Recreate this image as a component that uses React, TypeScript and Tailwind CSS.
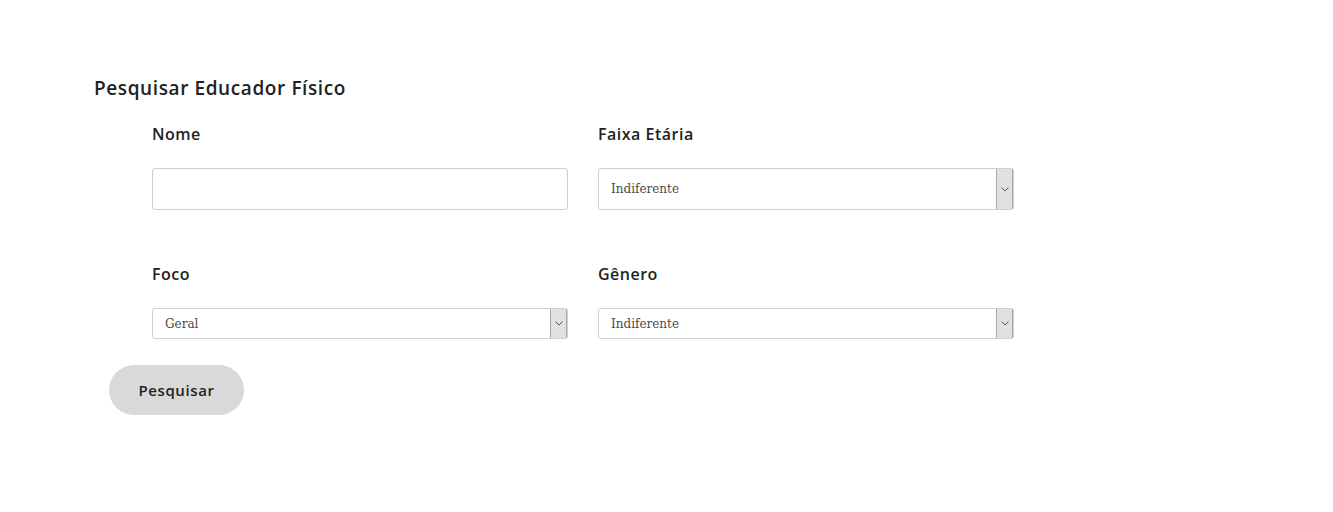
import React from 'react'

const Select = ({ value, tall }: { value: string; tall?: boolean }) => (
  <div
    className={`flex items-stretch w-[416px] border border-[#cfcfcf] rounded-[3px] bg-white ${tall ? 'h-[42px]' : 'h-[31px]'}`}
  >
    <div className="flex-1 flex items-center pl-3 text-[12px] text-[#4a4a4a] font-['DejaVu_Serif',serif]">
      {value}
    </div>
    <div className="w-[17px] bg-[#e1e1e1] border-l border-[#a9a9a9] border-r border-r-[#a9a9a9] flex items-center justify-center">
      <svg width="8" height="5" viewBox="0 0 8 5" fill="none">
        <path d="M0.5 0.5 L4 4 L7.5 0.5" stroke="#555" strokeWidth="1" />
      </svg>
    </div>
  </div>
)

const Label = ({ children }: { children: React.ReactNode }) => (
  <p className="text-[16px] font-semibold text-[#222] leading-5 tracking-[0.5px]">{children}</p>
)

export default function App() {
  return (
    <div className="min-h-[512px] bg-white font-['Open_Sans',sans-serif] pt-[76px] pl-[94px]">
      <h1 className="text-[19px] font-semibold text-[#222] leading-6 tracking-[0.6px]">Pesquisar Educador Físico</h1>

      <div className="pl-[58px] mt-[24px] grid grid-cols-[416px_416px] gap-x-[30px]">
        <div>
          <Label>Nome</Label>
          <input className="mt-[24px] w-[416px] h-[42px] border border-[#cfcfcf] rounded-[3px] outline-none" />
        </div>
        <div>
          <Label>Faixa Etária</Label>
          <div className="mt-[24px]">
            <Select value="Indiferente" tall />
          </div>
        </div>
        <div className="mt-[54px]">
          <Label>Foco</Label>
          <div className="mt-[24px]">
            <Select value="Geral" />
          </div>
        </div>
        <div className="mt-[54px]">
          <Label>Gênero</Label>
          <div className="mt-[24px]">
            <Select value="Indiferente" />
          </div>
        </div>
      </div>

      <button className="ml-[15px] mt-[26px] w-[135px] h-[50px] rounded-full bg-[#d9d9d9] text-[15px] font-semibold text-[#222] tracking-[0.6px]">
        Pesquisar
      </button>
    </div>
  )
}
